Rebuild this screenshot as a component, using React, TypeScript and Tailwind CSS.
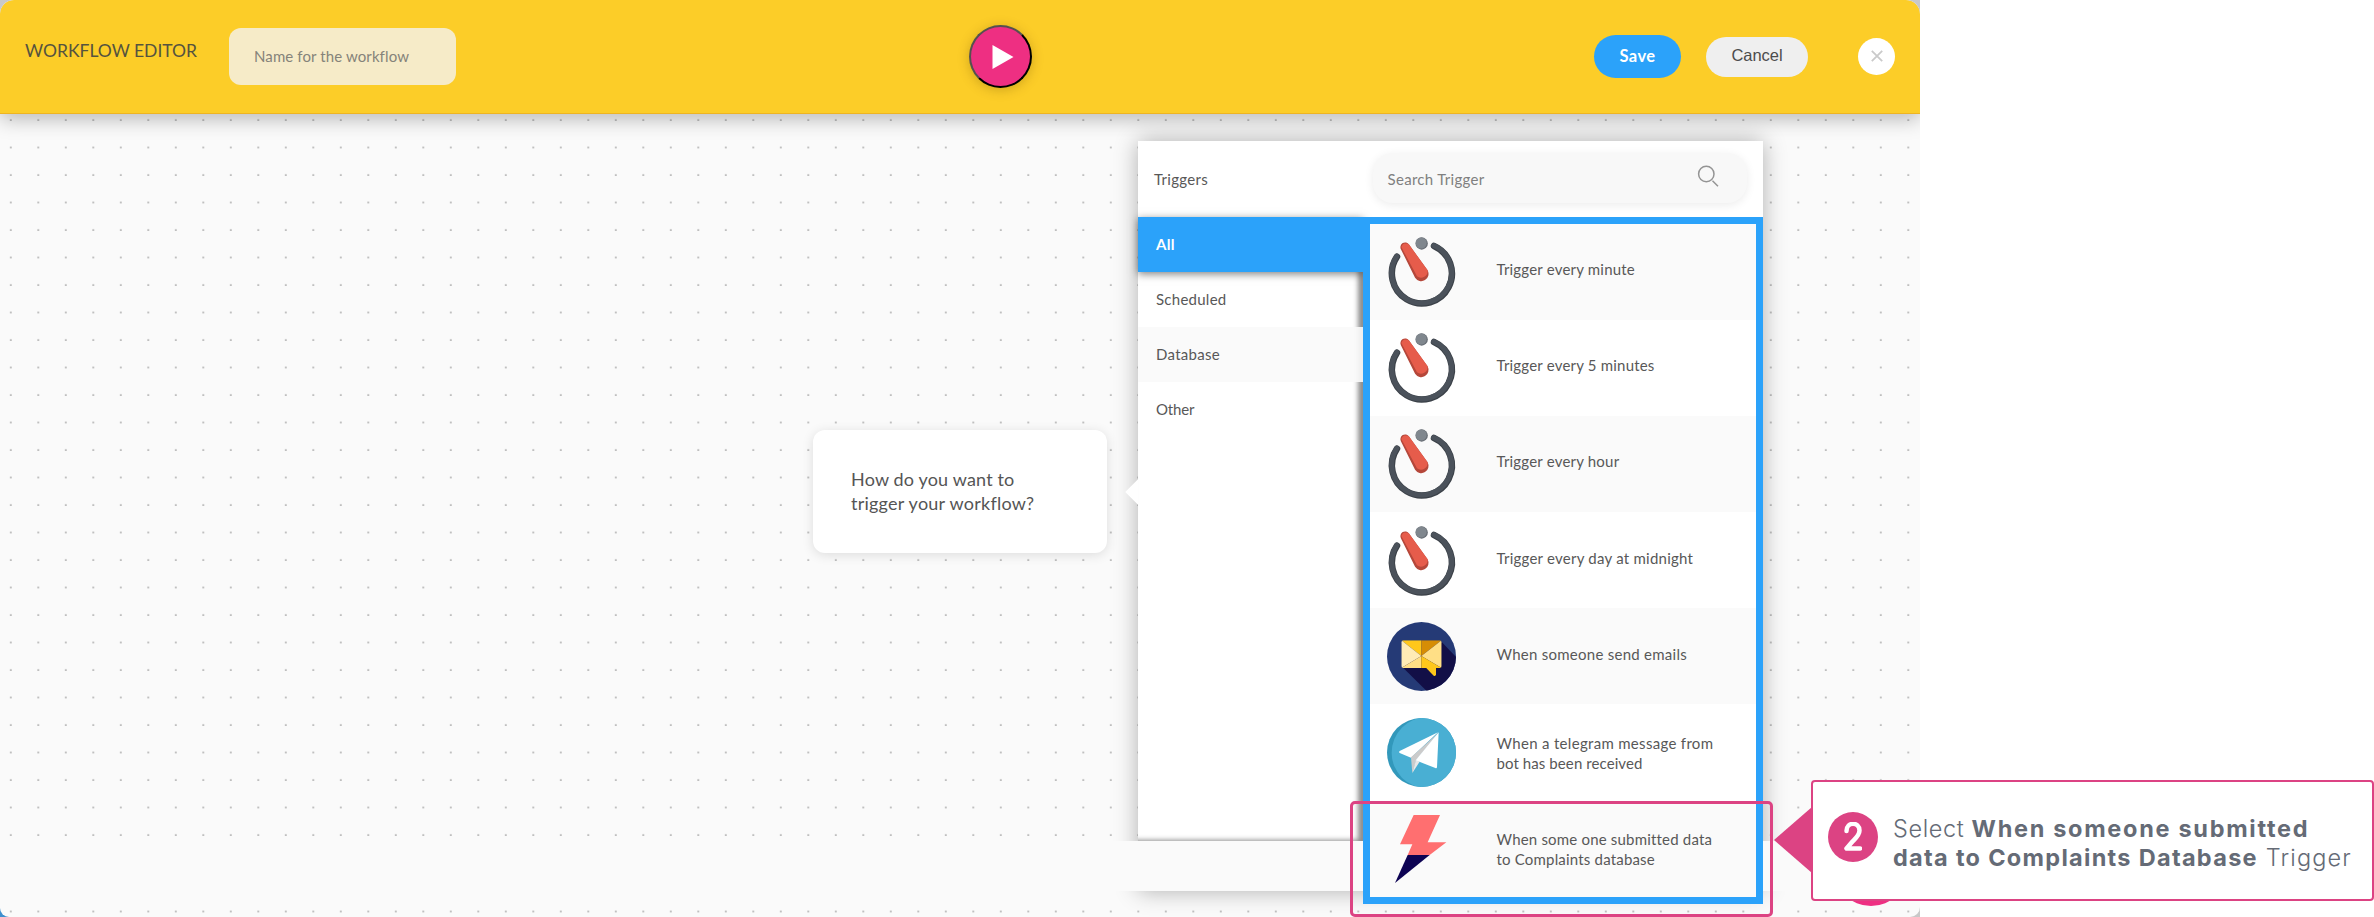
import React from "react";

type IconKind = "timer" | "email" | "telegram" | "bolt";

interface Line {
  text: string;
  tracking: string;
}

interface Trigger {
  icon: IconKind;
  lines: Line[];
}

const triggers: Trigger[] = [
  { icon: "timer", lines: [{ text: "Trigger every minute", tracking: "tracking-[0.2px]" }] },
  { icon: "timer", lines: [{ text: "Trigger every 5 minutes", tracking: "tracking-[0.2px]" }] },
  { icon: "timer", lines: [{ text: "Trigger every hour", tracking: "tracking-[0.2px]" }] },
  { icon: "timer", lines: [{ text: "Trigger every day at midnight", tracking: "tracking-[0.24px]" }] },
  { icon: "email", lines: [{ text: "When someone send emails", tracking: "tracking-[0.26px]" }] },
  {
    icon: "telegram",
    lines: [
      { text: "When a telegram message from", tracking: "tracking-[0.31px]" },
      { text: "bot has been received", tracking: "tracking-[0.09px]" },
    ],
  },
  {
    icon: "bolt",
    lines: [
      { text: "When some one submitted data", tracking: "tracking-[0.19px]" },
      { text: "to Complaints database", tracking: "tracking-[0.19px]" },
    ],
  },
];

function TimerIcon() {
  return (
    <svg viewBox="0 0 207 207" className="size-[69px] shrink-0 overflow-visible">
      <circle cx="104" cy="19.5" r="18.5" fill="#686e75" />
      <circle cx="102.500" cy="18" r="16.500" fill="#80878e" />
      <path d="M141 27A90 90 0 1 1 30 59" fill="none" stroke="#3b4148" strokeWidth="19.500" strokeLinecap="round" />
      <path d="M140 25.500A90 90 0 1 1 29.500 57.500" fill="none" stroke="#4b525b" strokeWidth="15" strokeLinecap="round" />
      <path d="M66 22.800A14 14 0 0 0 42 37.200L84.200 122.400A22 22 0 0 0 121.800 99.600Z" fill="#b5473a" />
      <path d="M66 22.800A14 14 0 0 0 43 30L90 118A20 20 0 0 0 121.800 99.600Z" fill="#e65c4b" />
    </svg>
  );
}

function EmailIcon() {
  return (
    <svg viewBox="0 0 207 207" className="size-[69px] shrink-0">
      <clipPath id="email-disc">
        <circle cx="103.500" cy="103.500" r="103.500" />
      </clipPath>
      <clipPath id="email-letter">
        <rect x="43" y="55" width="121" height="83" rx="6" />
      </clipPath>
      <g clipPath="url(#email-disc)">
        <rect width="207" height="207" fill="#253a76" />
        <path d="M162 58L210 108V210H122L46 135Z" fill="#120f47" />
      </g>
      <path d="M112 132L140 161Q146 165 147 157V132Z" fill="#ffc71b" />
      <g clipPath="url(#email-letter)">
        <path d="M43 55H103V102Z" fill="#ffc71b" />
        <path d="M103 55H164L103 102Z" fill="#d68d05" />
        <path d="M43 55L103 102L43 138Z" fill="#ffebb5" />
        <path d="M43 138L103 102V138Z" fill="#ffdf86" />
        <path d="M164 55V138L103 102Z" fill="#ffdf86" />
        <path d="M103 102L164 138H103Z" fill="#ffc71b" />
      </g>
    </svg>
  );
}

function TelegramIcon() {
  return (
    <svg viewBox="0 0 207 207" className="size-[69px] shrink-0">
      <clipPath id="telegram-disc">
        <circle cx="103.500" cy="103.500" r="103.500" />
      </clipPath>
      <g clipPath="url(#telegram-disc)">
        <rect width="207" height="207" fill="#3298bb" />
        <circle cx="121" cy="104" r="107" fill="#49afd3" />
      </g>
      <path d="M153 43L38 99Q34 102 38 105L72 119Z" fill="#fff" />
      <path d="M155 44L72 118L76 165L88 126Z" fill="#cbcbcb" />
      <path d="M76 165L87 126L98 131Z" fill="#e8e8e8" />
      <path d="M155 43L150 148Q149 152 145 150L86 127Z" fill="#fff" />
    </svg>
  );
}

function BoltIcon() {
  return (
    <svg viewBox="0 0 207 207" className="size-[69px] shrink-0">
      <path d="M80 3H159L122 85H178L128 123H62L76 91H39Z" fill="#ff6f70" />
      <path d="M62 123H128L24 207Z" fill="#0d0353" />
    </svg>
  );
}

const icons: Record<IconKind, () => React.ReactElement> = {
  timer: TimerIcon,
  email: EmailIcon,
  telegram: TelegramIcon,
  bolt: BoltIcon,
};

function Dots() {
  return (
    <svg className="absolute inset-0 size-full">
      <pattern id="dots" width="27.5" height="27.5" patternUnits="userSpaceOnUse">
        <rect x="10.200" y="5.500" width="1.200" height="1" fill="#444" />
      </pattern>
      <rect width="100%" height="727" fill="url(#dots)" />
      <g transform="translate(0 791.5)">
        <rect width="100%" height="11" fill="url(#dots)" />
      </g>
    </svg>
  );
}

function Header() {
  return (
    <header className="relative z-10 flex h-[114px] shrink-0 items-center rounded-t-[14px] border-b border-[#eeb422] bg-[#fccd28] pl-[25px] pr-[25px] shadow-[0_5px_20px_rgba(0,0,0,0.27)]">
      <h1 className="mb-[11px] w-[204px] text-[17.5px] leading-6 text-[#55533f]">WORKFLOW EDITOR</h1>
      <div className="flex h-[57px] w-[227px] items-center rounded-xl bg-[#f6ebc8] pl-[25px] text-[15px] tracking-[0.11px] text-[#85837a]">
        Name for the workflow
      </div>
      <button className="ml-[513px] flex size-[63px] items-center justify-center rounded-full border-2 border-t-[#55514f] border-r-black border-b-black border-l-[#55514f] bg-[#ee2f82] shadow-[0_2px_12px_rgba(90,60,0,0.28)]">
        <svg viewBox="0 0 22 24" className="ml-[5px] h-6 w-[22px]">
          <path d="M0.500 0L21.500 12L0.500 24Z" fill="#fff" />
        </svg>
      </button>
      <button className="ml-auto flex h-[43px] w-[87px] items-center justify-center rounded-full bg-[#2ba2fa] text-[16.5px] font-bold tracking-[0.4px] text-white">
        Save
      </button>
      <button className="ml-[25px] flex h-10 w-[102px] items-center justify-center rounded-full bg-[#efefef] pb-0.5 font-['Liberation_Sans',sans-serif] text-[16.5px] tracking-[-0.06px] text-[#4c4c4c]">
        Cancel
      </button>
      <button className="ml-[50px] flex size-[37px] items-center justify-center rounded-full bg-white pb-0.5">
        <svg viewBox="0 0 12 12" className="size-3 overflow-visible">
          <path d="M0.800 0.800L11.200 11.200M11.200 0.800L0.800 11.200" stroke="#cacaca" strokeWidth="1.800" />
        </svg>
      </button>
    </header>
  );
}

function TriggerPanel() {
  return (
    <section className="relative mt-[26.500px] ml-[31px] flex h-[750.5px] w-[625px] flex-col shadow-[0_0_22px_rgba(0,0,0,0.3)]">
      <div className="absolute top-[342px] -left-[9px] size-[18px] rotate-45 bg-white" />
      <div className="relative flex h-[76px] shrink-0 bg-white">
        <div className="flex w-[234.5px] items-center pt-px pl-4 text-[15px] tracking-[0.3px] text-[#585858]">Triggers</div>
        <div className="mt-[12.5px] flex h-[50px] w-[374px] items-center justify-between rounded-[20px] bg-[#f8f8f8] pr-[28px] pl-[15px] shadow-[0_2px_10px_rgba(0,0,0,0.08)]">
          <span className="pt-[3px] text-[15px] tracking-[0.31px] text-[#808080]">Search Trigger</span>
          <svg viewBox="0 0 22 22" className="mb-1 size-[22px]">
            <circle cx="9.300" cy="9" r="7.700" fill="none" stroke="#949494" strokeWidth="1.500" />
            <path d="M15.500 15.800L21 21.300" stroke="#949494" strokeWidth="1.500" />
          </svg>
        </div>
      </div>
      <div className="relative flex items-start">
        <nav className="flex h-[624.5px] w-[225px] flex-col bg-white text-[15px] text-[#585858] shadow-[inset_-5px_-1px_5px_rgba(0,0,0,0.45)]">
          <div className="flex h-[55px] items-center bg-[#2ba2fa] pt-px pl-[18px] font-bold tracking-[0.3px] text-white shadow-[0_2px_8px_rgba(0,0,0,0.5)]">
            All
          </div>
          <div className="flex h-[55px] items-center pt-px pl-[18px] tracking-[0.26px]">Scheduled</div>
          <div className="flex h-[55px] items-center bg-[#fafafa]/90 pt-px pl-[18px] tracking-[0.29px]">Database</div>
          <div className="flex h-[55px] items-center pt-px pl-[18px] tracking-[-0.15px]">Other</div>
        </nav>
        <div className="relative z-10 w-[400px] border-[7px] border-[#2ba2fa] bg-white">
          {triggers.map((trigger, i) => {
            const Icon = icons[trigger.icon];
            return (
              <div key={i} className="flex h-[96.2px] items-center bg-white pl-[17px] odd:bg-[#fafafa]">
                <Icon />
                <div
                  className={
                    trigger.lines.length === 1
                      ? "ml-[40.5px] pb-[5px] text-[15px] leading-5 text-[#585858]"
                      : "ml-[40.5px] pt-px text-[15px] leading-5 text-[#585858]"
                  }
                >
                  {trigger.lines.map((line) => (
                    <div key={line.text} className={line.tracking}>
                      {line.text}
                    </div>
                  ))}
                </div>
              </div>
            );
          })}
        </div>
        <div className="absolute top-[624.5px] -left-[60px] h-[50px] w-[735px] bg-[#fafafa]" />
      </div>
    </section>
  );
}

function Callout() {
  return (
    <div className="absolute top-[780px] left-[1774px] z-20 flex h-[121px] w-[600px] items-center">
      <svg viewBox="0 0 38 66" className="mt-[-2px] h-[66px] w-[38px] shrink-0">
        <path d="M0 33L38 0V66Z" fill="#dc4383" />
      </svg>
      <div className="-ml-px flex h-full flex-1 items-center rounded-[4px] border-2 border-[#dc4383] bg-white pl-[15px]">
        <div className="mb-[7px] flex size-[50px] items-center justify-center rounded-full bg-[#dc4383]">
          <svg viewBox="0 0 18 30" className="h-[30px] w-[18px]">
            <path
              d="M2.500 9C2.500 -0.500 15.500 -0.500 15.500 8.500C15.500 13 12 16 8.500 19.500L2.500 26.500H16"
              fill="none"
              stroke="#fff"
              strokeWidth="4.500"
              strokeLinecap="round"
              strokeLinejoin="round"
            />
          </svg>
        </div>
        <p className="mt-[5px] ml-[15px] font-['Inter',sans-serif] text-[23.5px] leading-[29px] whitespace-nowrap text-[#656b76]">
          <span className="font-light tracking-[0.6px]">Select </span>
          <span className="font-bold tracking-[1.7px]">When someone submitted</span>
          <br />
          <span className="font-bold tracking-[1.3px]">data to Complaints Database</span>
          <span className="font-light tracking-[1.15px]"> Trigger</span>
        </p>
      </div>
    </div>
  );
}

export default function App() {
  return (
    <div className="relative h-[917px] w-[2374px] overflow-hidden bg-white font-['Lato',sans-serif]">
      <div className="h-full w-[1920px] bg-[#c8c8c8]">
        <div className="h-full bg-[linear-gradient(#c8c8c8_0_800px,#3f8fce_800px)] bg-[length:20px_100%] bg-no-repeat">
          <div className="flex h-full flex-col overflow-hidden rounded-[14px] rounded-bl-[9px] rounded-br-[10px] bg-[#fafafa]">
            <Header />
            <main className="relative flex flex-1 items-start pl-[813px]">
              <Dots />
              <div className="relative z-10 mt-[316px] flex h-[123px] w-[294px] items-center rounded-xl bg-white pb-px pl-[38px] text-[18px] leading-6 text-[#555] shadow-[0_2px_12px_rgba(0,0,0,0.12)]">
                <p>
                  <span className="tracking-[0.17px]">How do you want to</span>
                  <br />
                  <span className="tracking-[0.24px]">trigger your workflow?</span>
                </p>
              </div>
              <TriggerPanel />
              <div className="absolute top-[718px] left-[1834px] size-[74px] rounded-full bg-[#ee2f82]" />
            </main>
          </div>
        </div>
      </div>
      <div className="absolute top-[801px] left-[1350px] z-20 h-[116px] w-[423px] rounded-[5px] border-3 border-[#dc4383]" />
      <Callout />
    </div>
  );
}
